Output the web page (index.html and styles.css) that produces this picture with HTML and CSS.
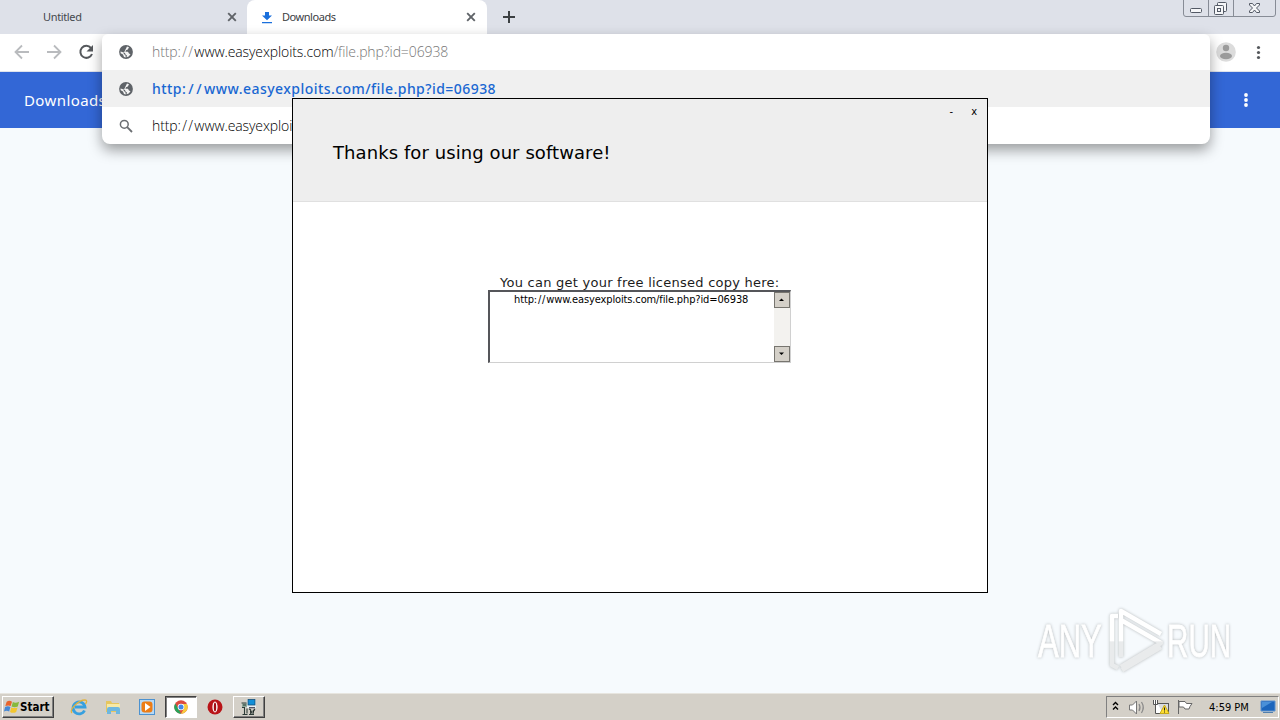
FILE: index.html
```html
<!DOCTYPE html>
<html lang="en">
<head>
<meta charset="utf-8">
<title>Downloads</title>
<link rel="stylesheet" href="styles.css">
</head>
<body>
<svg width="0" height="0" class="defs">
  <symbol id="globe" viewBox="0 0 14 14"><circle cx="7" cy="7" r="6.900" fill="#5f6368"/><path d="M8 1.500 10 2.300 8.800 4.500 7 5.200 6.400 6.700H9L10 8.500 11.500 9.300 9.700 11.500 7.500 12.300 8 10.500 6.500 9.500 6 8 4 7.200 1.500 6.500 1.700 8.300 4 9.500 5 12 6.800 12.500 6.500 10.500 4.500 8.500Z" fill="#f4f4f4"/></symbol>
  <symbol id="close" viewBox="0 0 10 10"><path d="M1.200 1.200 8.800 8.800M8.800 1.200 1.200 8.800" stroke="#5f6368" stroke-width="1.9"/></symbol>
</svg>
<div class="screen">
  <header class="tabs">
    <div class="tab idle"><span class="tab-title">Untitled</span><svg class="tab-close" width="10" height="10"><use href="#close"/></svg></div>
    <div class="tab active"><svg class="dl" width="12" height="13" viewBox="0 0 12 13"><path d="M4 1h4v3.500h3L6 9.300 1 4.500h3zM1 11h10v1.300H1z" fill="#1a6fdc"/></svg><span class="tab-title">Downloads</span><svg class="tab-close" width="10" height="10"><use href="#close"/></svg></div>
    <svg class="plus" width="12" height="12" viewBox="0 0 12 12"><path d="M6 0v12M0 6h12" stroke="#3c4043" stroke-width="2"/></svg>
    <svg class="controls" width="94" height="18" viewBox="0 0 94 18" fill="none"><path d="M.5 0V14Q.5 16.500 3 16.500H90Q92.500 16.500 92.500 14V0M25.500 0V16M50.500 0V16" stroke="#878c96"/><g stroke="#535965" fill="#f5f6f8"><rect x="7.500" y="8.500" width="11" height="4" rx="1"/><rect x="34.500" y="2.500" width="9" height="9" rx="1"/><rect x="31.500" y="5.500" width="9" height="9" rx="1"/><rect x="34.500" y="8.500" width="3" height="3"/><path d="M66.500 3.500h3l2 2.500 2-2.500h3v1.500l-3 3 3 3v1.500h-3l-2-2.500-2 2.500h-3v-1.500l3-3-3-3z"/></g></svg>
  </header>
  <div class="toolbar">
    <svg width="100" height="37" viewBox="0 0 100 37" fill="none"><path d="M29 18H16M22 11.500 15.500 18 22 24.500M47 18H60M54 11.500 60.500 18 54 24.500" stroke="#b9bbbe" stroke-width="1.8"/><path d="M91 14A6 6 0 1 0 92 20" stroke="#55585c" stroke-width="2"/><path d="M93 11v6.500h-6.500z" fill="#55585c"/></svg>
    <svg class="account" width="64" height="37" viewBox="0 0 64 37"><circle cx="10" cy="18" r="9.800" fill="#dcdcdc"/><circle cx="10" cy="14" r="3.200" fill="#9b9b9b"/><ellipse cx="10" cy="22" rx="6" ry="3.200" fill="#9b9b9b"/><g fill="#55585c"><circle cx="42.500" cy="13.500" r="1.600"/><circle cx="42.500" cy="18.500" r="1.600"/><circle cx="42.500" cy="23.500" r="1.600"/></g></svg>
  </div>
  <div class="bluebar"><span>Downloads</span><svg width="6" height="16" viewBox="0 0 6 16" fill="#fff"><circle cx="3" cy="3" r="1.900"/><circle cx="3" cy="8" r="1.900"/><circle cx="3" cy="13" r="1.900"/></svg></div>
  <main class="page"></main>

  <section class="omnibox">
    <div class="row"><svg width="14" height="14"><use href="#globe"/></svg><span class="url"><i>http<b>://</b></i>www.easyexploits.com<i>/file.php?id=06938</i></span></div>
    <div class="row selected"><svg width="14" height="14"><use href="#globe"/></svg><span class="url strong">http<b>://</b>www.easyexploits.com/file.php?id=06938</span></div>
    <div class="row last"><svg width="14" height="14" viewBox="0 0 14 14" fill="none" stroke="#6b6e72"><circle cx="5.300" cy="5.300" r="3.900" stroke-width="1.500"/><path d="M8.200 8.200 13 13" stroke-width="1.800"/></svg><span class="url">http<b>://</b>www.easyexploits.com/file.php?id=06938</span></div>
  </section>

  <section class="dialog">
    <header class="dialog-head">
      <div class="dialog-controls"><span>-</span><span>x</span></div>
      <h1>Thanks for using our software!</h1>
    </header>
    <div class="dialog-body">
      <p>You can get your free licensed copy here:</p>
      <div class="box">
        <span class="link">http<b>://</b>www.easyexploits.com/file.php?id=06938</span>
        <div class="scroll">
          <svg width="16" height="16"><rect x=".5" y=".5" width="15" height="15" fill="#d4d0c8" stroke="#77756f"/><path d="M5 9h5L7.500 6.500z" fill="#000"/></svg>
          <svg width="16" height="16"><rect x=".5" y=".5" width="15" height="15" fill="#d4d0c8" stroke="#77756f"/><path d="M5 6.500h5L7.500 9z" fill="#000"/></svg>
        </div>
      </div>
    </div>
  </section>

  <svg class="watermark" width="220" height="76" viewBox="0 0 220 76">
    <defs><linearGradient id="fade" x1="0" y1="0" x2="0" y2="74" gradientUnits="userSpaceOnUse"><stop offset=".48" stop-color="#fff"/><stop offset=".5" stop-color="#e9ebec"/></linearGradient></defs>
    <g class="mark-text" fill="url(#fade)" stroke="url(#fade)"><text transform="translate(8 52) scale(.66 1)">ANY</text><text transform="translate(137 52) scale(.63 1)">RUN</text></g>
    <g class="mark-play" fill="none" stroke="url(#fade)" stroke-width="4.500" stroke-linejoin="round"><path d="M88 11H82V60L88 63M91 52V6L131 29M91 20V50M91 62 131 38 91 15M92 65 131 42"/></g>
  </svg>

  <footer class="taskbar">
    <div class="start"><svg width="16" height="16" viewBox="0 0 18 16"><path d="M3 2Q6 0 9 2L7.500 7Q5 5.500 1.500 7z" fill="#e8642c"/><path d="M10 2.500Q13 4 17 2L15.500 7.500Q12 9 8.500 7.500z" fill="#86b93c"/><path d="M1.200 8Q4.500 6.500 7.200 8L5.800 13Q3 11.500 0 13z" fill="#4688d5"/><path d="M8.200 8.500Q12 10 15.200 8.500L13.700 13.500Q10 15.500 6.800 13.500z" fill="#f3c62f"/></svg><b>Start</b></div>
    <div class="quick">
      <span class="task"><svg width="18" height="18" viewBox="0 0 18 18" fill="none"><path d="M14.500 12.500A6 6 0 1 1 15 9H5" stroke="#37a0df" stroke-width="2.800"/><path d="M2 15C-1 12 8 2 15 2Q18 2 15.500 6" stroke="#e2b33c" stroke-width="1.300"/></svg></span>
      <span class="task"><svg width="18" height="18" viewBox="0 0 18 18"><path d="M2 3h5l1 2h7v9H2z" fill="#e6c65f"/><path d="M3 6h13v7H3z" fill="#f7e9a5"/><path d="M3 16v-5q0-2 2-2h9q2 0 2 2v5h-4v-3H7v3z" fill="#6eb7df"/></svg></span>
      <span class="task"><svg width="18" height="18" viewBox="0 0 18 18"><rect x="1.500" y="1.500" width="15" height="15" fill="#b7d9f5" stroke="#4c92d0"/><rect x="3.500" y="3.500" width="11" height="11" rx="3" fill="#ed7d16"/><path d="M7 5v8l5.500-4z" fill="#fff"/></svg></span>
      <span class="task pressed"><svg width="14" height="14" viewBox="0 0 14 14"><circle cx="7" cy="7" r="6.700" fill="#dd4b3e"/><path d="M1.200 3.600 4.500 9 7 13.700A6.700 6.700 0 0 1 1.200 3.600" fill="#26a35a"/><path d="M7 4h6A6.700 6.700 0 0 1 7 13.700L10 8.500z" fill="#f7cc3c"/><circle cx="7" cy="7" r="3.300" fill="#fff"/><circle cx="7" cy="7" r="2.500" fill="#4386e8"/></svg></span>
      <span class="task"><svg width="16" height="16" viewBox="0 0 16 16"><circle cx="8" cy="8" r="7.500" fill="#b91418"/><ellipse cx="8" cy="8" rx="2.600" ry="5.400" fill="#fff"/><ellipse cx="8" cy="8" rx="1.200" ry="4.600" fill="#a20d12"/></svg></span>
      <span class="task raised"><svg width="18" height="18" viewBox="0 0 18 18"><rect x="7" y="1" width="9" height="9" fill="#e8f1f4"/><rect x="8" y="1.500" width="7" height="5.500" fill="#128fd8" stroke="#174d73" stroke-width=".8"/><path d="M9 9h6v1.300H9z" fill="#556"/><path d="M2 5.500h5v3.500H2z" fill="#8fa89a"/><path d="M1.500 5h5M3 7h3M2 9.500h3M4.500 9v7M7 10.500v5M2.500 16.500h5M9 11l2 1M10 11l1.500 3-1 2.500M15 11l-2 2v3M9 16.500h5" stroke="#2d3c38" stroke-width="1.100"/></svg></span>
    </div>
    <div class="tray">
      <svg width="96" height="20" viewBox="0 0 96 20" fill="none"><path d="M6 8 8.500 5.500 11 8M6 12.500 8.500 10 11 12.500" stroke="#000" stroke-width="1.400"/><path d="M22.500 8h3l4-4v13l-4-4h-3z" fill="#fff" stroke="#777"/><path d="M32 7q2 3.500 0 7M34.500 5q3.500 5.500 0 11" stroke="#888" stroke-width="1.200"/><rect x="50.500" y="6.500" width="11" height="9" fill="#d9dce0" stroke="#555"/><path d="M46.500 3v4.500h4V3M48.500 3v13.500H56" stroke="#555" fill="#fff"/><path d="M57.500 8 62 16.500H53z" fill="#ffde32" stroke="#c7aa19"/><path d="M57.500 10.500v3M57.500 14.500v1" stroke="#222"/><path d="M71.500 3v14M72 4.500h6l1.500 2h5.500l-2 3-1 2.500h-4l-1.500-2H72z" fill="#fff" stroke="#666"/></svg>
      <span>4:59 PM</span>
      <svg class="desk" width="16" height="14" viewBox="0 0 16 14"><path d="M1 1h14v10H1z" fill="#1c65bc" stroke="#5c92cf"/><path d="M2 2h10L2 8z" fill="#4a90d8"/><path d="M3 12h10v1H3z" fill="#517fae"/></svg>
    </div>
  </footer>
</div>
</body>
</html>
```
FILE: styles.css
```css
* { box-sizing: border-box; }
body { margin: 0; font-family: "DejaVu Sans Condensed", "DejaVu Sans", sans-serif; }
svg { display: block; flex: none; }
.defs { position: absolute; }
.screen { position: relative; width: 1280px; height: 720px; overflow: hidden; display: flex; flex-direction: column; background: #f6fafd; }
.tabs { height: 34px; flex: none; display: flex; align-items: center; background: #dee1e9; }
.tab { height: 34px; display: flex; align-items: center; font: 11px "Noto Sans", sans-serif; color: #45484d; }
.tab-title { padding-bottom: 2px; letter-spacing: -.35px; }
.idle { width: 247px; padding: 0 10px 0 43px; }
.active { width: 240px; padding: 0 11px 0 14px; background: #fff; border-radius: 8px 8px 0 0; color: #3c4043; }
.active .tab-title { letter-spacing: -.45px; }
.dl { margin-right: 9px; }
.tab-close { margin-left: auto; }
.plus { margin-left: 16px; }
.controls { margin-left: auto; margin-right: 3px; align-self: flex-start; }
.toolbar { height: 38px; flex: none; display: flex; justify-content: space-between; background: #fff; border-bottom: 1px solid #dfe3ec; }
.bluebar { height: 56px; flex: none; display: flex; align-items: center; justify-content: space-between; padding: 0 31px 0 24px; background: #3367d6; color: #fff; font: 15px "Noto Sans", sans-serif; letter-spacing: .4px; }
.page { flex: 1; }
.omnibox { position: absolute; left: 102px; top: 34px; width: 1108px; height: 110px; border-radius: 6px 6px 8px 8px; overflow: hidden; background: #fff; box-shadow: 0 6px 14px rgba(0,0,0,.38); }
.row { height: 36px; display: flex; align-items: center; padding-left: 17px; gap: 19px; }
.row:first-child .url { padding-bottom: 1px; }
.selected { height: 37px; background: #f0f0f0; }
.last { height: 37px; }
.url { font: 300 14px "Open Sans", "Noto Sans", sans-serif; letter-spacing: -.1px; color: #000; white-space: nowrap; }
.url i { font-style: normal; color: #777; }
.url b, .link b { font-weight: inherit; letter-spacing: 1.300px; }
.strong { font-family: "Noto Sans", sans-serif; font-weight: 500; color: #1967d2; letter-spacing: .45px; }
.strong b { letter-spacing: 2.500px; }
.dialog { position: absolute; left: 292px; top: 98px; width: 696px; height: 495px; border: 1px solid #000; background: #fff; }
.dialog-head { height: 103px; background: #eee; border-bottom: 1px solid #e0e0e0; }
.dialog-controls { display: flex; justify-content: flex-end; gap: 18px; height: 42px; padding: 5px 10px 0 0; font: 11px/16px "DejaVu Sans Condensed", sans-serif; }
.dialog h1 { margin: 0; padding-left: 40px; font: 18px/23px "DejaVu Sans", sans-serif; letter-spacing: .08px; white-space: nowrap; }
.dialog-body { padding: 72px 0 0 195px; }
.dialog p { margin: 0 0 0 12px; height: 16px; font: 13px/18px "DejaVu Sans", sans-serif; letter-spacing: .25px; color: #1c1c1c; white-space: nowrap; }
.box { width: 303px; height: 73px; display: flex; justify-content: space-between; border: 2px solid; border-color: #55565a #d0d0d0 #d0d0d0 #55565a; border-right-width: 1px; border-bottom-width: 1px; }
.link { padding-left: 24px; font: 11px/15px "DejaVu Sans Condensed", sans-serif; letter-spacing: -.13px; white-space: nowrap; }
.link b { letter-spacing: .8px; }
.scroll { height: 70px; display: flex; flex-direction: column; justify-content: space-between; background: #f3f2ef; }
.watermark { position: absolute; left: 1030px; top: 605px; filter: drop-shadow(0 0 1.5px #b4b8ba); }
.mark-text { font: 47px "Liberation Sans", sans-serif; stroke-width: .8px; }
.taskbar { height: 27px; flex: none; display: flex; align-items: center; padding-bottom: 1px; background: #d4d0c8; border-top: 1px solid #e7e5df; }
.start, .raised { border: 1px solid; border-color: #fff #404040 #404040 #fff; box-shadow: inset -1px -1px #808080; }
.start { width: 52px; height: 22px; margin: 1px 0 0 2px; padding-left: 1px; display: flex; align-items: center; font-size: 11.500px; }
.quick { display: flex; align-items: center; margin-left: 8px; padding-top: 1px; }
.task { width: 34px; height: 22px; display: flex; align-items: center; justify-content: center; }
.pressed { width: 32px; margin: 0 1px; border: 1px solid; border-color: #404040 #fff #fff #404040; background: #fff; box-shadow: inset 1px 1px #808080; }
.raised { width: 32px; margin-left: 1px; }
.tray { margin-left: auto; margin-right: 1px; margin-top: 1px; width: 173px; height: 22px; display: flex; align-items: center; border: 1px solid; border-color: #808080 #fff #fff #808080; font-size: 11px; white-space: nowrap; }
.tray span { margin-left: 6px; }
.desk { margin-left: auto; margin-right: 2px; }
```
